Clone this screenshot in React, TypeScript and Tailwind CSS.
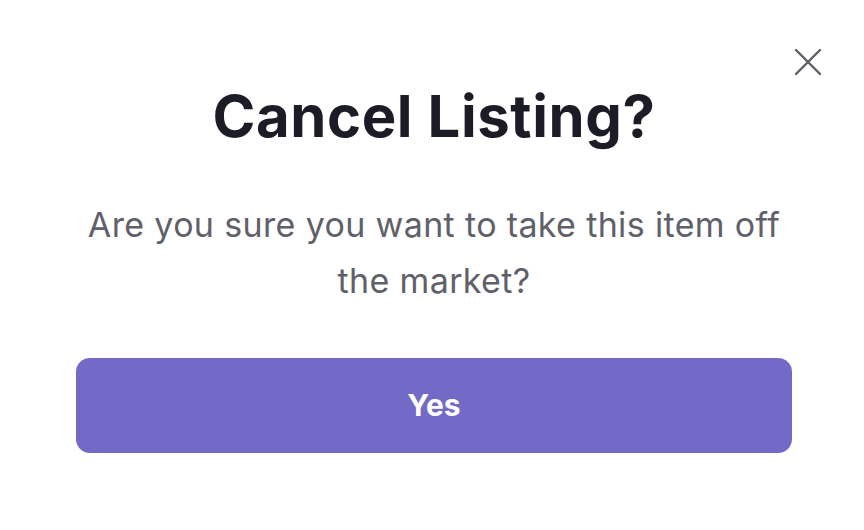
import { X } from "lucide-react";

export default function App() {
  return (
    <div
      className="relative h-[530px] w-[864px] bg-white overflow-hidden"
      style={{ fontFamily: "Inter, 'Open Sans', sans-serif" }}
    >
      <button className="absolute right-[32px] top-[38px] text-[#5c5d66]" title="Close">
        <X size={48} strokeWidth={1.2} />
      </button>

      <div className="flex flex-col items-center pl-[76px] pr-[72px] pt-[77px]">
        <h1 className="text-[58px] leading-[78px] font-bold tracking-[0.6px] text-[#1b1c25]">
          Cancel Listing?
        </h1>
        <p className="mt-[42px] text-center text-[34px] leading-[56px] text-[#5f606a] tracking-[0.35px]">
          Are you sure you want to take this item off the market?
        </p>
        <button className="mt-[49px] h-[95px] w-full rounded-[14px] bg-[#7369c6] text-[30px] font-bold text-white">
          Yes
        </button>
      </div>
    </div>
  );
}
